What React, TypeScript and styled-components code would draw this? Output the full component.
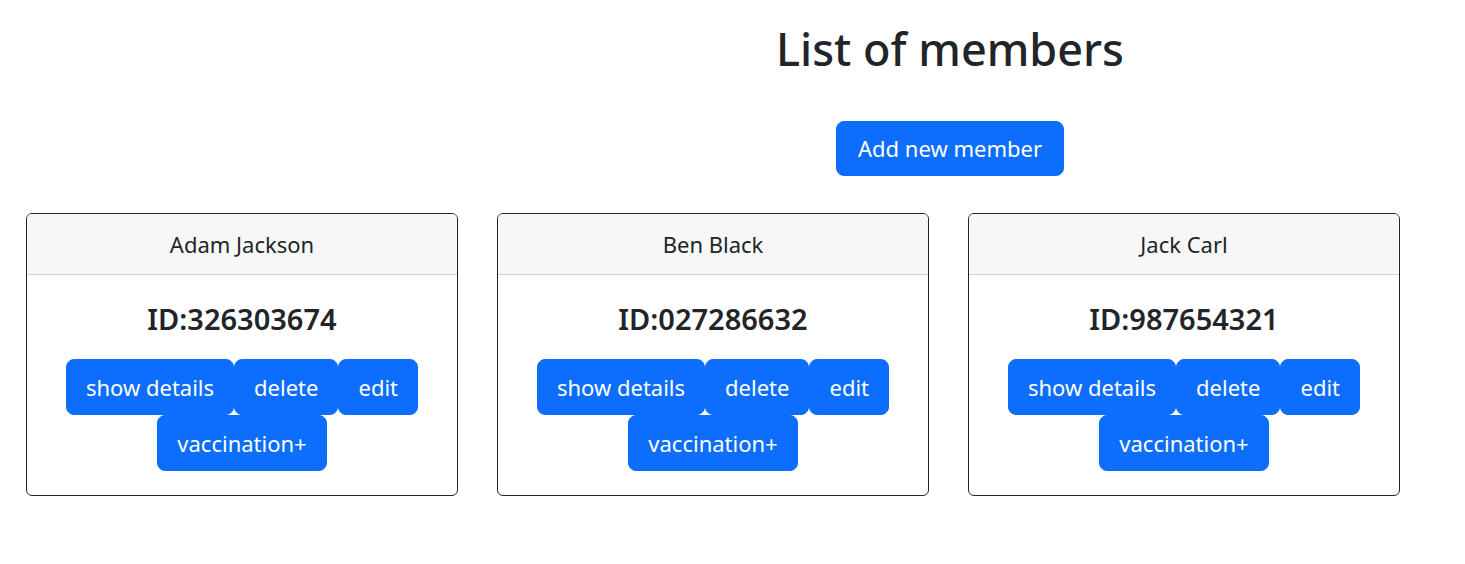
import React from "react";
import styled, { createGlobalStyle } from "styled-components";

const Global = createGlobalStyle`
  *, *::before, *::after { box-sizing: border-box; }
  html, body { margin: 0; padding: 0; background: #fff; }
  body {
    font-family: "Noto Sans", "Open Sans", sans-serif;
    color: #212529;
  }
`;

const Page = styled.div`
  display: flex;
  flex-direction: column;
  padding-top: 22px;
`;

const Header = styled.header`
  display: flex;
  flex-direction: column;
  align-items: center;
  padding-left: 435px;
`;

const Title = styled.h1`
  margin: 0;
  font-size: 45px;
  font-weight: 500;
  line-height: 54px;
`;

const Button = styled.button`
  font-family: inherit;
  font-size: 22px;
  line-height: 34px;
  color: #fff;
  background: #0d6efd;
  border: 1px solid #0d6efd;
  border-radius: 8px;
  padding: 10px 19px;
  cursor: pointer;
`;

const AddButton = styled(Button)`
  margin-top: 45px;
  line-height: 33px;
  padding: 10px 21px;
`;

const Cards = styled.div`
  display: flex;
  gap: 39px;
  padding-left: 26px;
  margin-top: 37px;
`;

const Card = styled.div`
  width: 432px;
  border: 1px solid #212529;
  border-radius: 6px;
  overflow: hidden;
  display: flex;
  flex-direction: column;
`;

const CardHeader = styled.div`
  background: #f7f7f7;
  border-bottom: 1px solid #d0d0d0;
  text-align: center;
  font-size: 22px;
  line-height: 33px;
  padding: 14px 16px 13px;
`;

const CardBody = styled.div`
  display: flex;
  flex-direction: column;
  align-items: center;
  padding: 26px 16px 24px;
`;

const MemberId = styled.h3`
  margin: 0 0 23px;
  font-size: 29px;
  font-weight: 600;
  line-height: 35px;
`;

const ButtonGroup = styled.div`
  display: flex;
  flex-wrap: wrap;
  justify-content: center;
  max-width: 370px;
`;

const members = [
  { name: "Adam Jackson", id: "326303674" },
  { name: "Ben Black", id: "027286632" },
  { name: "Jack Carl", id: "987654321" },
];

export default function App() {
  return (
    <Page>
      <Global />
      <Header>
        <Title>List of members</Title>
        <AddButton>Add new member</AddButton>
      </Header>
      <Cards>
        {members.map((m) => (
          <Card key={m.id}>
            <CardHeader>{m.name}</CardHeader>
            <CardBody>
              <MemberId>ID:{m.id}</MemberId>
              <ButtonGroup>
                <Button>show details</Button>
                <Button>delete</Button>
                <Button>edit</Button>
                <Button>vaccination+</Button>
              </ButtonGroup>
            </CardBody>
          </Card>
        ))}
      </Cards>
    </Page>
  );
}
